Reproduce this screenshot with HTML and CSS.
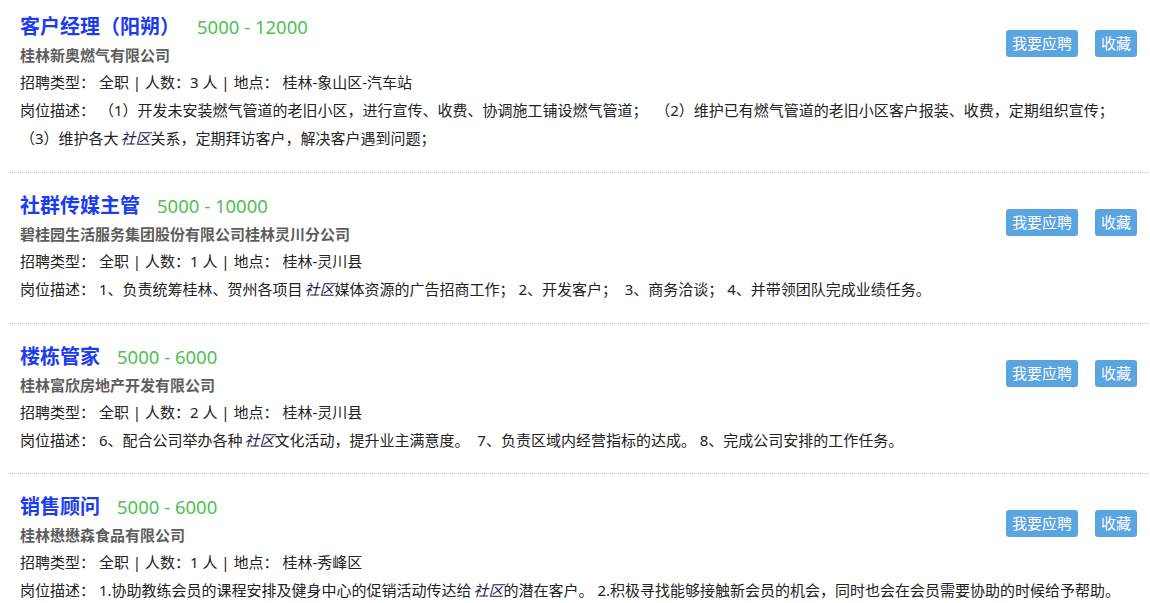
FILE: index.html
```html
<!DOCTYPE html>
<html lang="zh-CN">
<head>
<meta charset="utf-8">
<title>招聘信息</title>
<link rel="stylesheet" href="styles.css">
</head>
<body>
<div class="job-list">
  <div class="job">
    <div class="actions">
      <a class="btn">我要应聘</a><a class="btn">收藏</a>
    </div>
    <div class="job-head"><span class="job-title">客户经理（阳朔）</span><span class="salary">5000 - 12000</span></div>
    <div class="company">桂林新奥燃气有限公司</div>
    <div class="info">招聘类型： 全职 | 人数：3 人 | 地点： 桂林-象山区-汽车站</div>
    <div class="desc">岗位描述： （1）开发未安装燃气管道的老旧小区，进行宣传、收费、协调施工铺设燃气管道；&nbsp;&nbsp;（2）维护已有燃气管道的老旧小区客户报装、收费，定期组织宣传；<br>（3）维护各大<em>社区</em>关系，定期拜访客户，解决客户遇到问题；</div>
  </div>
  <div class="job">
    <div class="actions">
      <a class="btn">我要应聘</a><a class="btn">收藏</a>
    </div>
    <div class="job-head"><span class="job-title">社群传媒主管</span><span class="salary">5000 - 10000</span></div>
    <div class="company">碧桂园生活服务集团股份有限公司桂林灵川分公司</div>
    <div class="info">招聘类型： 全职 | 人数：1 人 | 地点： 桂林-灵川县</div>
    <div class="desc">岗位描述： 1、负责统筹桂林、贺州各项目<em>社区</em>媒体资源的广告招商工作； 2、开发客户；&nbsp;&nbsp;3、商务洽谈； 4、并带领团队完成业绩任务。</div>
  </div>
  <div class="job">
    <div class="actions">
      <a class="btn">我要应聘</a><a class="btn">收藏</a>
    </div>
    <div class="job-head"><span class="job-title">楼栋管家</span><span class="salary">5000 - 6000</span></div>
    <div class="company">桂林富欣房地产开发有限公司</div>
    <div class="info">招聘类型： 全职 | 人数：2 人 | 地点： 桂林-灵川县</div>
    <div class="desc">岗位描述： 6、配合公司举办各种<em>社区</em>文化活动，提升业主满意度。&nbsp;&nbsp;7、负责区域内经营指标的达成。 8、完成公司安排的工作任务。</div>
  </div>
  <div class="job">
    <div class="actions">
      <a class="btn">我要应聘</a><a class="btn">收藏</a>
    </div>
    <div class="job-head"><span class="job-title">销售顾问</span><span class="salary">5000 - 6000</span></div>
    <div class="company">桂林懋懋森食品有限公司</div>
    <div class="info">招聘类型： 全职 | 人数：1 人 | 地点： 桂林-秀峰区</div>
    <div class="desc">岗位描述： 1.协助教练会员的课程安排及健身中心的促销活动传达给<em>社区</em>的潜在客户。 2.积极寻找能够接触新会员的机会，同时也会在会员需要协助的时候给予帮助。</div>
  </div>
</div>
</body>
</html>
```
FILE: styles.css
```css
html, body {
  margin: 0;
  padding: 0;
  background: #fff;
}
body {
  padding: 0 1px 0 8px;
  font-family: "Noto Sans", "Noto Sans CJK SC", sans-serif;
  font-size: 15px;
  color: #222;
}
.job {
  padding: 17px 12px 19.5px 12px;
  border-bottom: 1px dotted #c8c8c8;
}
.job:first-child {
  padding-top: 11px;
  padding-bottom: 20px;
}
.actions {
  float: right;
  margin-top: 19px;
  display: flex;
  gap: 17px;
}
.btn {
  display: block;
  height: 27px;
  line-height: 27px;
  padding: 0 6px;
  background: #5ba4e2;
  color: #fff;
  border-radius: 3px;
  font-size: 15px;
  cursor: pointer;
}
.job-head {
  height: 31px;
  line-height: 31px;
}
.job-title {
  font-size: 20px;
  font-weight: bold;
  color: #1c3cf2;
}
.salary {
  margin-left: 17px;
  font-size: 18.5px;
  color: #4fbf4f;
}
.company {
  line-height: 26px;
  font-weight: bold;
  color: #5e5e5e;
}
.info {
  line-height: 28px;
}
.desc {
  line-height: 28px;
}
.desc em {
  font-style: italic;
  color: #1c1c5c;
  padding-left: 2px;
}
```
